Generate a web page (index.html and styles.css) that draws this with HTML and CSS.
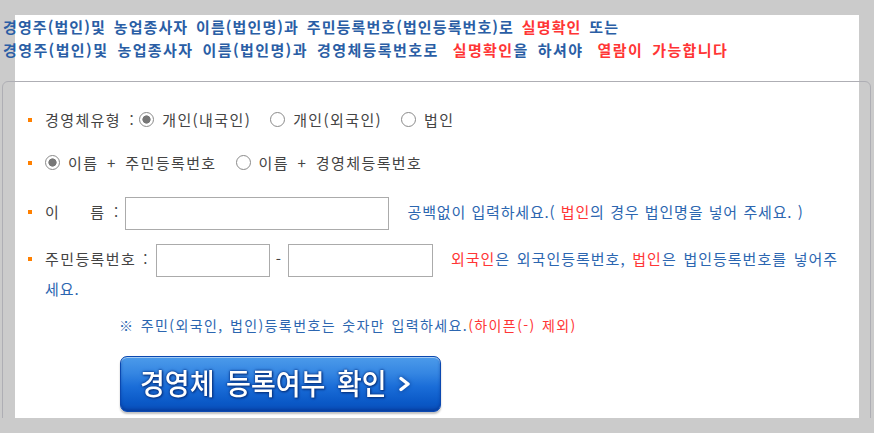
FILE: index.html
```html
<!DOCTYPE html>
<html lang="ko">
<head>
<meta charset="utf-8">
<title>경영체 등록여부 확인</title>
<link rel="stylesheet" href="styles.css">
</head>
<body>
<div class="panel">
  <div class="content">
    <p class="notice"><span class="line1">경영주(법인)및 농업종사자 이름(법인명)과 주민등록번호(법인등록번호)로 <span class="red">실명확인</span> 또는</span><br><span class="line2">경영주(법인)및 농업종사자 이름(법인명)과 경영체등록번호로 <span class="red wide">실명확인</span>을 하셔야 <span class="red wide">열람이 가능합니다</span></span></p>
    <div class="box">
      <div class="row row-type">경영체유형 :<span class="radio checked first"></span>개인(내국인)<span class="radio"></span>개인(외국인)<span class="radio"></span>법인</div>
      <div class="row row-mode"><span class="radio checked lead"></span>이름 + 주민등록번호<span class="radio"></span>이름 + 경영체등록번호</div>
      <div class="row row-name">이<span class="spacer"></span>름 :<input class="field field-name" type="text"><span class="hint">공백없이 입력하세요.( <span class="red">법인</span>의 경우 법인명을 넣어 주세요. )</span></div>
      <div class="row row-id"><span class="label">주민등록번호 :</span><input class="field field-id1" type="text"><span class="dash">-</span><input class="field field-id2" type="text"><span class="idhint"><span class="red">외국인</span>은 외국인등록번호, <span class="red">법인</span>은 법인등록번호를 넣어주</span><br><span class="idhint-end">세요.</span></div>
      <p class="note">※ 주민(외국인, 법인)등록번호는 숫자만 입력하세요.<span class="red">(하이픈(-) 제외)</span></p>
      <button class="check-btn" type="button"><span class="btn-label">경영체 등록여부 확인</span><svg class="chev" width="13" height="16" viewBox="0 0 13 16"><polyline points="3,2.5 10,8 3,13.5" fill="none" stroke="#fff" stroke-width="3.4" stroke-linecap="round" stroke-linejoin="round"/></svg></button>
    </div>
  </div>
</div>
</body>
</html>
```
FILE: styles.css
```css
html, body {
  margin: 0;
  padding: 0;
}
body {
  background: #cbcbcb;
  font-family: "Noto Sans CJK KR", "Noto Sans", sans-serif;
  color: #444;
}
.panel {
  margin: 15px 0 0 15px;
  width: 844px;
  height: 403px;
  background: #fff;
}
.content {
  margin-left: -13px;
  width: 869px;
}
.notice {
  margin: 0;
  padding-left: 1px;
  font-size: 15px;
  font-weight: bold;
  line-height: 23px;
  color: #2a5ea5;
  letter-spacing: 1.1px;
  word-spacing: 2.5px;
  white-space: nowrap;
}
.line2 {
  letter-spacing: 1.4px;
  word-spacing: 3.5px;
}
.wide {
  margin-left: 5px;
}
.red {
  color: #ff3535;
}
.box {
  margin-top: 20px;
  border: 1px solid #aeaeb4;
  border-radius: 6px;
  padding: 23px 0 14px 42px;
  height: 306px;
  font-size: 15px;
  letter-spacing: 1.4px;
  word-spacing: 3px;
}
.row {
  text-indent: -17px;
  line-height: 30px;
  white-space: nowrap;
}
.row::before {
  content: "";
  display: inline-block;
  width: 4px;
  height: 4px;
  background: #ff8000;
  margin-right: 13px;
  vertical-align: middle;
  position: relative;
  top: -2px;
}
.row-mode {
  margin-top: 13px;
}
.row-name {
  margin-top: 17px;
  line-height: 33px;
}
.row-id {
  margin-top: 14px;
  line-height: 24px;
  color: #2c66b0;
  letter-spacing: 1px;
  word-spacing: 1.5px;
}
.label {
  color: #444;
  letter-spacing: 1.4px;
}
.idhint {
  margin-left: 18px;
}
.radio {
  display: inline-block;
  box-sizing: border-box;
  width: 15px;
  height: 15px;
  border: 1px solid #8a8a8a;
  border-radius: 50%;
  background: #fff;
  vertical-align: middle;
  position: relative;
  top: -2px;
  margin: 0 8px 0 19px;
  text-indent: 0;
}
.radio.checked {
  background: radial-gradient(circle, #777 0, #777 3.8px, #fff 4.4px);
}
.radio.first {
  margin-left: 4px;
}
.radio.lead {
  margin-left: 0;
}
.spacer {
  display: inline-block;
  width: 30px;
}
.field {
  box-sizing: border-box;
  height: 33px;
  border: 1px solid #ababab;
  background: #fff;
  vertical-align: middle;
  text-indent: 0;
  padding: 0;
  margin: 0;
}
.field-name {
  width: 264px;
  margin-left: 5px;
}
.field-id1 {
  width: 114px;
  margin-left: 7px;
}
.field-id2 {
  width: 145px;
}
.dash {
  display: inline-block;
  width: 18px;
  text-align: center;
  text-indent: 0;
  color: #444;
}
.hint {
  color: #2c66b0;
  margin-left: 19px;
  letter-spacing: 0.8px;
  word-spacing: 0.5px;
}
.note {
  margin: 12px 0 0 74px;
  font-size: 14px;
  line-height: 24px;
  color: #2c66b0;
  white-space: nowrap;
  letter-spacing: 1.4px;
  word-spacing: 1px;
}
.check-btn {
  display: flex;
  align-items: center;
  justify-content: flex-start;
  gap: 11px;
  margin: 19px 0 0 75px;
  width: 321px;
  height: 56px;
  border: 1px solid #0b48b0;
  border-radius: 7px;
  background: linear-gradient(#4c9bea 0%, #3586e2 30%, #1a6dd8 55%, #0a58c6 85%, #0a4fb8 100%);
  box-shadow: inset 0 1px 0 rgba(255,255,255,0.5), inset 0 -2px 3px rgba(0,40,130,0.45), 0 2px 2px rgba(0,0,0,0.25);
  padding: 0 0 2px 19px;
  cursor: pointer;
  letter-spacing: 0;
  word-spacing: 0;
}
.btn-label {
  display: inline-block;
  font-family: "Noto Sans CJK KR", sans-serif;
  font-size: 27px;
  font-weight: 500;
  line-height: 30px;
  color: #fff;
  letter-spacing: 0;
  word-spacing: 4px;
  transform: scaleY(1.08);
  text-shadow: 0 0 3px #0a3a8c, 0 0 2px #0a3a8c, 1px 1px 2px #06307a;
}
.chev {
  margin-top: 2px;
  filter: drop-shadow(0 0 2px #0a3a8c);
}
```
